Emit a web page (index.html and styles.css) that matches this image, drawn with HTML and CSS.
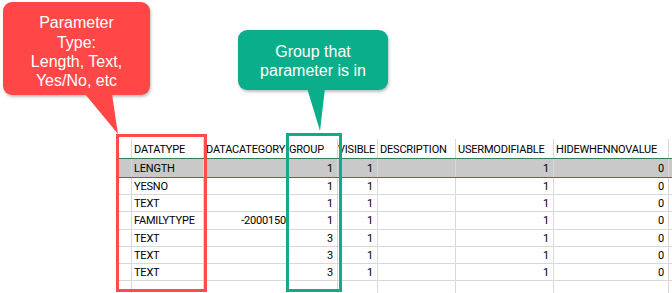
FILE: index.html
```html
<!DOCTYPE html>
<html>
<head>
<meta charset="utf-8">
<link rel="stylesheet" href="styles.css">
</head>
<body>
<div class="canvas">
  <div class="sheet">
    <div class="row head">
      <div class="c"></div><div class="c">DATATYPE</div><div class="c">DATACATEGORY</div><div class="c">GROUP</div><div class="c clipv">VISIBLE</div><div class="c">DESCRIPTION</div><div class="c">USERMODIFIABLE</div><div class="c">HIDEWHENNOVALUE</div><div class="c"></div>
    </div>
    <div class="row sel">
      <div class="c"></div><div class="c">LENGTH</div><div class="c"></div><div class="c n">1</div><div class="c n">1</div><div class="c"></div><div class="c n">1</div><div class="c n">0</div><div class="c"></div>
    </div>
    <div class="row">
      <div class="c"></div><div class="c">YESNO</div><div class="c"></div><div class="c n">1</div><div class="c n">1</div><div class="c"></div><div class="c n">1</div><div class="c n">0</div><div class="c"></div>
    </div>
    <div class="row">
      <div class="c"></div><div class="c">TEXT</div><div class="c"></div><div class="c n">1</div><div class="c n">1</div><div class="c"></div><div class="c n">1</div><div class="c n">0</div><div class="c"></div>
    </div>
    <div class="row">
      <div class="c"></div><div class="c">FAMILYTYPE</div><div class="c n cut">-2000150</div><div class="c n">1</div><div class="c n">1</div><div class="c"></div><div class="c n">1</div><div class="c n">0</div><div class="c"></div>
    </div>
    <div class="row">
      <div class="c"></div><div class="c">TEXT</div><div class="c"></div><div class="c n">3</div><div class="c n">1</div><div class="c"></div><div class="c n">1</div><div class="c n">0</div><div class="c"></div>
    </div>
    <div class="row">
      <div class="c"></div><div class="c">TEXT</div><div class="c"></div><div class="c n">3</div><div class="c n">1</div><div class="c"></div><div class="c n">1</div><div class="c n">0</div><div class="c"></div>
    </div>
    <div class="row">
      <div class="c"></div><div class="c">TEXT</div><div class="c"></div><div class="c n">3</div><div class="c n">1</div><div class="c"></div><div class="c n">1</div><div class="c n">0</div><div class="c"></div>
    </div>
    <div class="row empty">
      <div class="c"></div><div class="c"></div><div class="c"></div><div class="c"></div><div class="c"></div><div class="c"></div><div class="c"></div><div class="c"></div><div class="c"></div>
    </div>
  </div>

  <div class="frame frame-red"></div>
  <div class="frame frame-green"></div>

  <div class="callout callout-red">
    <div class="bubble">Parameter<br>Type:<br>Length, Text,<br>Yes/No, etc</div>
    <svg class="tail" width="40" height="42" viewBox="0 0 40 42"><polygon points="0,0 27,0 33,40" fill="#ff4747"/></svg>
  </div>

  <div class="callout callout-green">
    <div class="bubble">Group that<br>parameter is in</div>
    <svg class="tail" width="24" height="44" viewBox="0 0 24 44"><polygon points="0,0 18,0 13,43" fill="#0bae8b"/></svg>
  </div>
</div>
</body>
</html>
```
FILE: styles.css
```css
html, body {
  margin: 0;
  padding: 0;
  background: #ffffff;
}
.canvas {
  position: relative;
  width: 672px;
  height: 293px;
  overflow: hidden;
}
.sheet {
  padding: 139px 0 0 118px;
  font-family: Roboto, "Liberation Sans", sans-serif;
  font-size: 11px;
  color: #000000;
}
.row {
  display: grid;
  grid-template-columns: 14px 72px 83px 51px 40px 78px 98px 115px 10px;
  height: 17.2px;
}
.row.head {
  height: 19px;
  border-bottom: 1px solid #3c7d52;
}
.row.sel {
  height: 18px;
  background: #c9c9c9;
  border-bottom: 1px solid #3c7d52;
}
.c {
  box-sizing: border-box;
  border-right: 1px solid #d8d8d8;
  border-bottom: 1px solid #d8d8d8;
  padding: 1px 2px 0 2px;
  white-space: nowrap;
  overflow: hidden;
  display: flex;
  align-items: center;
  letter-spacing: -0.2px;
}
.row.head .c, .row.sel .c {
  border-bottom: none;
}
.row.head .c {
  padding-top: 2px;
}
.c.n {
  justify-content: flex-end;
  padding-right: 4px;
}
.c.cut {
  padding-right: 0;
  overflow: hidden;
}
.c.clipv {
  padding-left: 0;
}
.frame {
  position: absolute;
  box-sizing: border-box;
  border: 3px solid;
}
.frame-red {
  left: 116px;
  top: 134px;
  width: 91px;
  height: 158px;
  border-color: #ff4b4b;
}
.frame-green {
  left: 286px;
  top: 133px;
  width: 56px;
  height: 159px;
  border-color: #13aa8a;
}
.callout {
  position: absolute;
  font-family: "Liberation Sans", Arial, sans-serif;
  font-size: 16px;
  color: #ffffff;
  text-align: center;
}
.callout .bubble {
  box-sizing: border-box;
  border-radius: 9px;
  box-shadow: 1px 2px 3px rgba(0,0,0,0.25);
  display: flex;
  align-items: center;
  justify-content: center;
}
.callout .tail {
  position: absolute;
  display: block;
}
.callout-red {
  left: 3px;
  top: 2px;
}
.callout-red .bubble {
  width: 147px;
  height: 93px;
  background: #ff4747;
  line-height: 19.3px;
  padding-top: 7px;
}
.callout-red .tail {
  left: 82px;
  top: 92px;
}
.callout-green {
  left: 238px;
  top: 30px;
}
.callout-green .bubble {
  width: 150px;
  height: 60px;
  background: #0bae8b;
  line-height: 19.5px;
  padding-top: 2px;
}
.callout-green .tail {
  left: 69px;
  top: 58px;
}
```
